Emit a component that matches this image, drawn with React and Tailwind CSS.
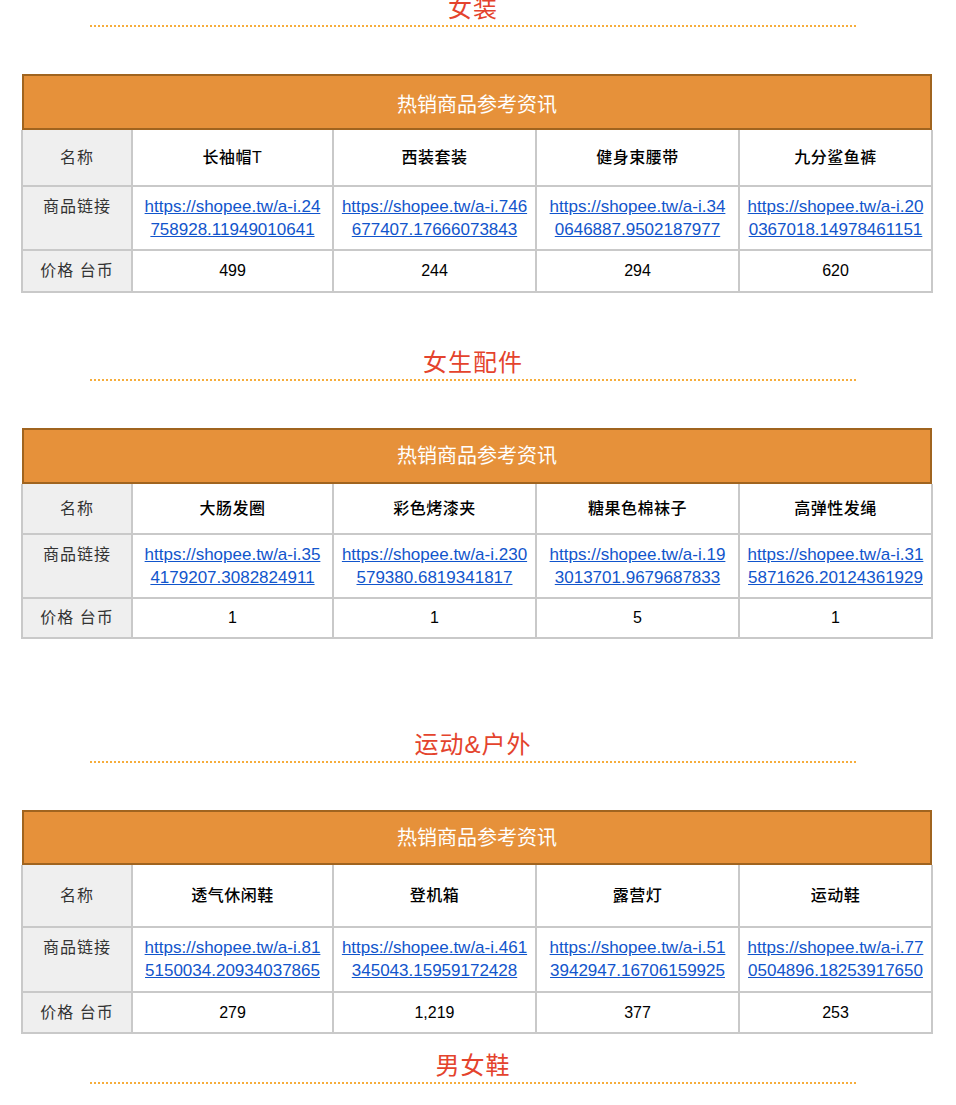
const sections = [
  {
    title: "女装",
    mt: "mt-0",
    header: "h-[56px] pt-[6px]",
    rows: ["h-[56px]", "h-[64px]", "h-[42px]"],
    items: [
      { name: "长袖帽T", link: ["https://shopee.tw/a-i.24", "758928.11949010641"], price: "499" },
      { name: "西装套装", link: ["https://shopee.tw/a-i.746", "677407.17666073843"], price: "244" },
      { name: "健身束腰带", link: ["https://shopee.tw/a-i.34", "0646887.9502187977"], price: "294" },
      { name: "九分鲨鱼裤", link: ["https://shopee.tw/a-i.20", "0367018.14978461151"], price: "620" },
    ],
  },
  {
    title: "女生配件",
    mt: "mt-[61px]",
    header: "h-[56px]",
    rows: ["h-[50px]", "h-[64px]", "h-[40px]"],
    items: [
      { name: "大肠发圈", link: ["https://shopee.tw/a-i.35", "4179207.3082824911"], price: "1" },
      { name: "彩色烤漆夹", link: ["https://shopee.tw/a-i.230", "579380.6819341817"], price: "1" },
      { name: "糖果色棉袜子", link: ["https://shopee.tw/a-i.19", "3013701.9679687833"], price: "5" },
      { name: "高弹性发绳", link: ["https://shopee.tw/a-i.31", "5871626.20124361929"], price: "1" },
    ],
  },
  {
    title: "运动&户外",
    mt: "mt-[97px]",
    header: "h-[55px]",
    rows: ["h-[62px]", "h-[65px]", "h-[41px]"],
    items: [
      { name: "透气休闲鞋", link: ["https://shopee.tw/a-i.81", "5150034.20934037865"], price: "279" },
      { name: "登机箱", link: ["https://shopee.tw/a-i.461", "345043.15959172428"], price: "1,219" },
      { name: "露营灯", link: ["https://shopee.tw/a-i.51", "3942947.16706159925"], price: "377" },
      { name: "运动鞋", link: ["https://shopee.tw/a-i.77", "0504896.18253917650"], price: "253" },
    ],
  },
];

const cell = "border-2 border-[#c9c9c9] text-center";
const label = `${cell} bg-[#efefef] text-[#333] text-[16px] tracking-[1px]`;

function Title({ text, mt }) {
  return (
    <div className={`${mt} ml-[90px] w-[766px] h-[27px] border-b-2 border-dotted border-[#f6ad3c] text-center`}>
      <span className="block text-[24px] leading-[18px] tracking-[1px] text-[#e4432d]">{text}</span>
    </div>
  );
}

function Section({ s }) {
  return (
    <div>
      <Title text={s.title} mt={s.mt} />
      <div className="mt-[47px] ml-[22px] w-[910px]">
        <div
          className={`${s.header} border-2 border-[#a0641f] bg-[#e6913a] flex items-center justify-center text-white text-[20px]`}
        >
          热销商品参考资讯
        </div>
        <table className="ml-[-1px] w-[910px] table-fixed border-collapse">
          <colgroup>
            <col className="w-[110px]" />
            <col className="w-[201px]" />
            <col className="w-[203px]" />
            <col className="w-[203px]" />
            <col className="w-[193px]" />
          </colgroup>
          <tbody>
            <tr className={s.rows[0]}>
              <td className={`${label} border-t-0 align-middle`}>名称</td>
              {s.items.map((it) => (
                <td key={it.name} className={`${cell} border-t-0 align-middle text-black text-[16px] font-medium tracking-[0.5px]`}>
                  {it.name}
                </td>
              ))}
            </tr>
            <tr className={s.rows[1]}>
              <td className={`${label} align-top pt-[8px] leading-[23px]`}>商品链接</td>
              {s.items.map((it) => (
                <td key={it.name} className={`${cell} align-top pt-[8px] px-0 leading-[23px]`}>
                  <a href="#" className="text-[17px] text-[#1155cc] underline">
                    {it.link[0]}
                    <br />
                    {it.link[1]}
                  </a>
                </td>
              ))}
            </tr>
            <tr className={s.rows[2]}>
              <td className={`${label} align-middle`}>价格 台币</td>
              {s.items.map((it) => (
                <td key={it.name} className={`${cell} align-middle text-black text-[16px]`}>
                  {it.price}
                </td>
              ))}
            </tr>
          </tbody>
        </table>
      </div>
    </div>
  );
}

export default function App() {
  return (
    <div
      className="w-[956px] h-[1105px] overflow-hidden bg-white"
      style={{ fontFamily: '"Liberation Sans", "Noto Sans CJK SC", sans-serif' }}
    >
      {sections.map((s) => (
        <Section key={s.title} s={s} />
      ))}
      <Title text="男女鞋" mt="mt-[23px]" />
    </div>
  );
}
